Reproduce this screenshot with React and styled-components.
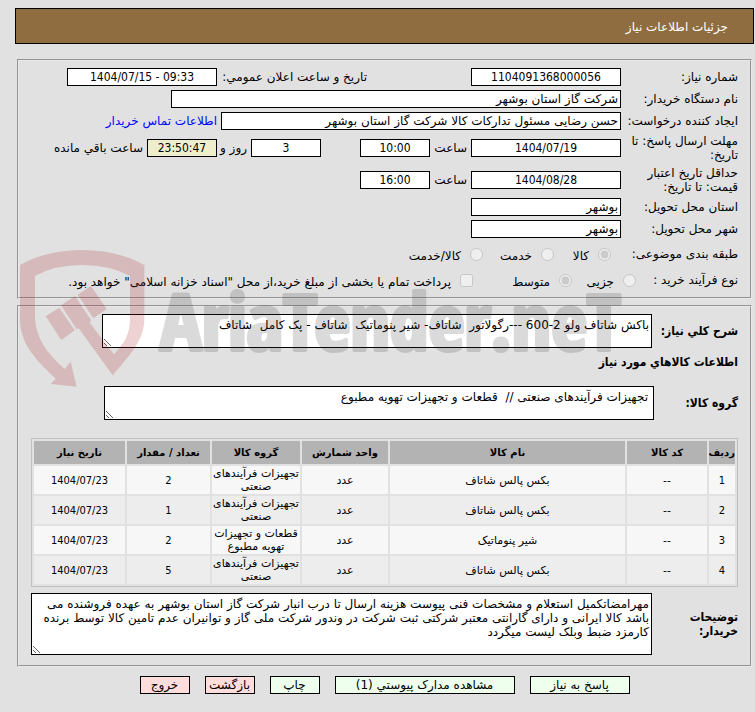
import React from "react";
import styled, { createGlobalStyle } from "styled-components";

const items = [
  { id: 1, code: "--", name: "بکس پالس شاتاف", unit: "عدد", group: "تجهیزات فرآیندهای صنعتی", count: 2, date: "1404/07/23" },
  { id: 2, code: "--", name: "بکس پالس شاتاف", unit: "عدد", group: "تجهیزات فرآیندهای صنعتی", count: 1, date: "1404/07/23" },
  { id: 3, code: "--", name: "شیر پنوماتیک", unit: "عدد", group: "قطعات و تجهیزات تهویه مطبوع", count: 2, date: "1404/07/23" },
  { id: 4, code: "--", name: "بکس پالس شاتاف", unit: "عدد", group: "تجهیزات فرآیندهای صنعتی", count: 5, date: "1404/07/23" },
];

const Watermark = () => (
  <WatermarkSvg viewBox="0 0 620 160" aria-hidden="true">
    <svg x="0" y="0" width="160" height="160" viewBox="0 0 480 480">
      <g fill="rgba(170, 25, 35, 0.2)">
        <path d="M30 75 Q110 30 216 30 Q322 30 403 75 V240 C401 305 355 350 308 406 L206 265 L200 268 L153 196 L195 168 L243 240 L239 248 L312 343 C342 310 360 285 360 235 V108 Q300 75 216 75 Q132 75 75 108 V235 C80 300 112 340 164 387 L182 365 L200 440 L122 432 L137 416 C60 345 30 300 30 235 Z" />
        <path d="M107 229 L148 203 L194 271 L154 300 Z" />
        <path d="M203 164 L243 138 L290 207 L250 235 Z" />
      </g>
    </svg>
    <text x="150" y="110">AriaTender.neT</text>
  </WatermarkSvg>
);

const App = () => {
  return (
    <>
      <GlobalStyle />
      <Page>
        <Header>جزئیات اطلاعات نیاز</Header>

        <Panel>
          <Row>
            <Label htmlFor="needNo">شماره نیاز:</Label>
            <Field id="needNo" $w={150} $center readOnly value="1104091368000056" />
            <SideLabel htmlFor="announce">تاریخ و ساعت اعلان عمومي:</SideLabel>
            <Field id="announce" $w={150} $center dir="ltr" readOnly value="1404/07/15 - 09:33" />
          </Row>
          <Row>
            <Label htmlFor="buyer">نام دستگاه خریدار:</Label>
            <Field id="buyer" $w={450} readOnly value="شرکت گاز استان بوشهر" />
          </Row>
          <Row>
            <Label htmlFor="creator">ایجاد کننده درخواست:</Label>
            <Field id="creator" $w={400} readOnly value="حسن رضایی مسئول تدارکات کالا شرکت گاز استان بوشهر" />
            <ContactLink href="#contact">اطلاعات تماس خریدار</ContactLink>
          </Row>
          <Row $h={28}>
            <Label htmlFor="deadline">مهلت ارسال پاسخ: تا تاریخ:</Label>
            <Field id="deadline" $w={150} $center readOnly value="1404/07/19" />
            <Word htmlFor="deadlineHour" $w={41}>ساعت</Word>
            <Field id="deadlineHour" $w={70} $center readOnly value="10:00" />
            <Remaining>
              <Field id="days" $w={70} $center readOnly value="3" />
              <Word htmlFor="days" $w={34}>روز و</Word>
              <Field id="clock" $w={70} $center $tint readOnly value="23:50:47" />
              <Word htmlFor="clock">ساعت باقي مانده</Word>
            </Remaining>
          </Row>
          <Row $h={28}>
            <Label htmlFor="validity">حداقل تاریخ اعتبار قیمت: تا تاریخ:</Label>
            <Field id="validity" $w={150} $center readOnly value="1404/08/28" />
            <Word htmlFor="validityHour" $w={41}>ساعت</Word>
            <Field id="validityHour" $w={70} $center readOnly value="16:00" />
          </Row>
          <Row>
            <Label htmlFor="province">استان محل تحویل:</Label>
            <Field id="province" $w={150} readOnly value="بوشهر" />
          </Row>
          <Row>
            <Label htmlFor="city">شهر محل تحویل:</Label>
            <Field id="city" $w={150} readOnly value="بوشهر" />
          </Row>
          <Row $h={24} role="radiogroup" aria-labelledby="subject">
            <Caption id="subject" $w={127}>طبقه بندی موضوعی:</Caption>
            <Option $w={57}><Radio name="subject" defaultChecked /><span>کالا</span></Option>
            <Option $w={71}><Radio name="subject" /><span>خدمت</span></Option>
            <Option><Radio name="subject" /><span>کالا/خدمت</span></Option>
          </Row>
          <Row $h={20} role="radiogroup" aria-labelledby="process">
            <Caption id="process" $w={102}>نوع فرآیند خرید :</Caption>
            <Option $w={64}><Radio name="process" /><span>جزیی</span></Option>
            <Option $w={99}><Radio name="process" defaultChecked /><span>متوسط</span></Option>
            <Option><Check /><span>پرداخت تمام یا بخشی از مبلغ خرید،از محل "اسناد خزانه اسلامی" خواهد بود.</span></Option>
          </Row>
        </Panel>

        <Panel $last>
          <Block>
            <BoldLabel htmlFor="summary">شرح کلي نیاز:</BoldLabel>
            <Area id="summary" $w={550} $h={34} readOnly value="باکش شاتاف ولو 2-600 ---رگولاتور  شاتاف- شیر پنوماتیک  شاتاف - پک کامل  شاتاف" />
          </Block>
          <Title>اطلاعات کالاهاي مورد نیاز</Title>
          <Block>
            <BoldLabel htmlFor="group" $narrow>گروه کالا:</BoldLabel>
            <Area id="group" $w={550} $h={34} $inset readOnly value="تجهیزات فرآیندهای صنعتی //  قطعات و تجهیزات تهویه مطبوع" />
          </Block>
          <Table>
            <thead>
              <tr>
                <Th $w={26}>ردیف</Th>
                <Th $w={80}>کد کالا</Th>
                <Th>نام کالا</Th>
                <Th $w={86}>واحد شمارش</Th>
                <Th $w={88}>گروه کالا</Th>
                <Th $w={83}>تعداد / مقدار</Th>
                <Th $w={91}>تاریخ نیاز</Th>
              </tr>
            </thead>
            <tbody>
              {items.map((item) => (
                <ItemRow key={item.id}>
                  <NumberCell>{item.id}</NumberCell>
                  <td>{item.code}</td>
                  <td>{item.name}</td>
                  <td>{item.unit}</td>
                  <td>{item.group}</td>
                  <NumberCell>{item.count}</NumberCell>
                  <NumberCell>{item.date}</NumberCell>
                </ItemRow>
              ))}
            </tbody>
          </Table>
          <Block>
            <BoldLabel htmlFor="notes">توضیحات خریدار:</BoldLabel>
            <Area
              id="notes"
              $h={62}
              readOnly
              value="مهرامضاتکمیل استعلام و مشخصات فنی پیوست هزینه ارسال تا درب انبار شرکت گاز استان بوشهر به عهده فروشنده می باشد کالا ایرانی و دارای گارانتی معتبر شرکتی ثبت شرکت در وندور شرکت ملی گاز و توانیران عدم تامین کالا توسط برنده کارمزد ضبط وبلک لیست میگردد"
            />
          </Block>
        </Panel>

        <Actions>
          <Button $w={100}>پاسخ به نیاز</Button>
          <Button $w={180}>مشاهده مدارک پیوستي (1)</Button>
          <Button $w={50}>چاپ</Button>
          <Button $w={50} $red>بازگشت</Button>
          <Button $w={50} $red>خروج</Button>
        </Actions>

        <Watermark />
      </Page>
    </>
  );
};

export default App;

// Styled Components
const font = `"DejaVu Sans", sans-serif`;
const narrowFont = `"DejaVu Sans Condensed", "DejaVu Sans", sans-serif`;

const GlobalStyle = createGlobalStyle`
  * {
    box-sizing: border-box;
  }

  body {
    margin: 0;
    background: #e1e1e1;
    font-family: ${font};
    font-size: 12px;
    line-height: 14px;
    color: #000;
  }

  input, textarea, button {
    font: inherit;
    color: inherit;
  }
`;

const Page = styled.main`
  direction: rtl;
  position: relative;
  padding: 8px 1px 18px 15px;
`;

const Header = styled.header`
  height: 36px;
  margin-bottom: 15px;
  padding: 11px 25px;
  border: 1px solid #000;
  background: #8f6d40;
  color: #fff;
`;

const Panel = styled.section`
  display: flex;
  flex-direction: column;
  gap: 4px;
  margin: 0 2px 6px;
  padding: 7px 12px ${(props) => (props.$last ? 10 : 7)}px;
  border: 2px groove #e8e8e8;
`;

const Row = styled.div`
  display: flex;
  align-items: center;
  height: ${(props) => props.$h || 18}px;
`;

const Label = styled.label`
  flex: none;
  width: 117px;
`;

const Caption = styled.span`
  flex: none;
  width: ${(props) => props.$w}px;
`;

const SideLabel = styled.label`
  flex: none;
  width: 150px;
  margin-right: 104px;
  white-space: nowrap;
`;

const Word = styled.label`
  flex: none;
  width: ${(props) => (props.$w ? `${props.$w}px` : "auto")};
  padding: 0 4px;
  white-space: nowrap;
`;

const Remaining = styled.div`
  display: flex;
  align-items: center;
  margin-right: 39px;
`;

const Field = styled.input`
  width: ${(props) => props.$w}px;
  height: 18px;
  padding: 0 2px;
  border: 1px solid #000;
  border-radius: 0;
  background: ${(props) => (props.$tint ? "#eeeecc" : "#fff")};
  font-family: ${(props) => (props.$center ? narrowFont : font)};
  text-align: ${(props) => (props.$center ? "center" : "right")};
`;

const ContactLink = styled.a`
  margin-right: 4px;
  color: #0000ff;
  text-decoration: none;
  white-space: nowrap;
`;

const Option = styled.label`
  display: flex;
  flex: none;
  align-items: center;
  gap: 9px;
  width: ${(props) => (props.$w ? `${props.$w}px` : "auto")};
  white-space: nowrap;

  span {
    padding-top: 4px;
  }
`;

const Radio = styled.input.attrs({ type: "radio", disabled: true })`
  width: 13px;
  height: 13px;
  margin: 0;
`;

const Check = styled.input.attrs({ type: "checkbox", disabled: true })`
  width: 13px;
  height: 13px;
  margin: 0;
`;

const Block = styled.div`
  display: flex;
  align-items: center;
`;

const BoldLabel = styled.label`
  flex: none;
  width: ${(props) => (props.$narrow ? 84 : 86)}px;
  padding-left: 4px;
  font-family: ${narrowFont};
  font-weight: bold;
`;

const Area = styled.textarea`
  display: block;
  flex: ${(props) => (props.$w ? "none" : 1)};
  width: ${(props) => (props.$w ? `${props.$w}px` : "auto")};
  height: ${(props) => props.$h}px;
  padding: 3px ${(props) => (props.$inset ? 5 : 2)}px;
  border: 1px solid #000;
  border-radius: 0;
  background: #fff;
  overflow: hidden;
`;

const Title = styled.h2`
  margin: 3px 0 13px;
  font-family: ${narrowFont};
  font-size: 12px;
  line-height: 14px;
`;

const Table = styled.table`
  width: 100%;
  margin: 14px 0 2px;
  table-layout: fixed;
  border: 1px solid #c0c0c0;
  border-collapse: separate;
  border-spacing: 2px;
  font-size: 11px;
  line-height: 13px;
  text-align: center;
`;

const Th = styled.th`
  width: ${(props) => (props.$w ? `${props.$w}px` : "auto")};
  height: 23px;
  padding: 0;
  background: #b3b3b3;
  font-size: 10px;
  white-space: nowrap;
`;

const ItemRow = styled.tr`
  background: #e1e1e1;

  td {
    height: 28px;
    padding: 0;
    background: #f7f7f7;
  }

  &:nth-child(even) td {
    background: #ededed;
  }
`;

const NumberCell = styled.td`
  font-family: ${narrowFont};
`;

const Actions = styled.div`
  display: flex;
  justify-content: center;
  gap: 15px;
  padding-top: 3px;
`;

const Button = styled.button`
  width: ${(props) => props.$w}px;
  height: 18px;
  padding: 0;
  border: 1px solid #000;
  border-radius: 0;
  background: ${(props) => (props.$red ? "#ffdddd" : "#eeffee")};
  white-space: nowrap;
`;

const WatermarkSvg = styled.svg`
  position: absolute;
  top: 240px;
  left: 10px;
  width: 620px;
  height: 160px;
  direction: ltr;
  pointer-events: none;

  text {
    fill: #373737;
    stroke: #373737;
    stroke-width: 4px;
    stroke-linejoin: round;
    opacity: 0.18;
    font-family: "Liberation Sans Narrow", "Open Sans Condensed", "DejaVu Sans Condensed", sans-serif;
    font-size: 78px;
    font-weight: bold;
  }
`;
